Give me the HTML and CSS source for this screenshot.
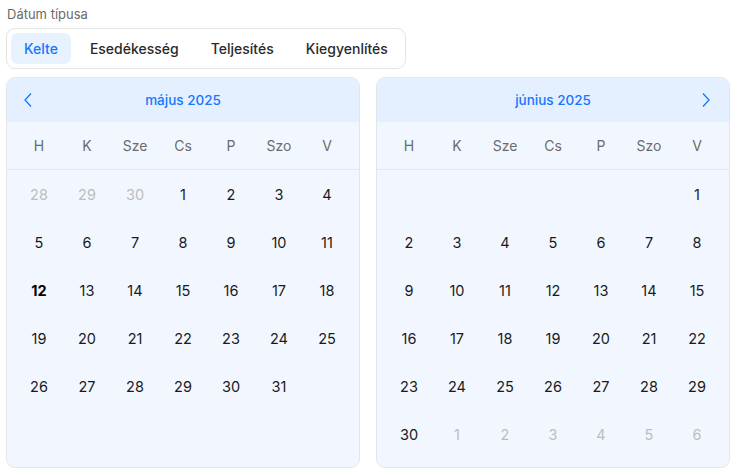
FILE: index.html
```html
<!DOCTYPE html>
<html lang="hu">
<head>
  <meta charset="UTF-8" />
  <title>Dátum típusa</title>
  <link rel="stylesheet" href="styles.css">
</head>
<body>
  <div class="page">
    <div class="field-label">Dátum típusa</div>
    <div class="segmented">
      <button class="seg active">Kelte</button>
      <button class="seg">Esedékesség</button>
      <button class="seg">Teljesítés</button>
      <button class="seg">Kiegyenlítés</button>
    </div>

    <div class="calendars">
      <div class="cal">
        <div class="cal-head">
          <span class="nav prev">
            <svg width="10" height="16" viewBox="0 0 10 16"><path d="M8 1.5 L2 8 L8 14.5" fill="none" stroke="#1677ff" stroke-width="1.3"/></svg>
          </span>
          <span class="cal-title">május 2025</span>
          <span class="nav"></span>
        </div>
        <div class="weekdays">
          <span>H</span><span>K</span><span>Sze</span><span>Cs</span><span>P</span><span>Szo</span><span>V</span>
        </div>
        <div class="days">
          <span class="out">28</span><span class="out">29</span><span class="out">30</span><span>1</span><span>2</span><span>3</span><span>4</span>
          <span>5</span><span>6</span><span>7</span><span>8</span><span>9</span><span>10</span><span>11</span>
          <span class="today">12</span><span>13</span><span>14</span><span>15</span><span>16</span><span>17</span><span>18</span>
          <span>19</span><span>20</span><span>21</span><span>22</span><span>23</span><span>24</span><span>25</span>
          <span>26</span><span>27</span><span>28</span><span>29</span><span>30</span><span>31</span><span></span>
          <span></span><span></span><span></span><span></span><span></span><span></span><span></span>
        </div>
      </div>

      <div class="cal">
        <div class="cal-head">
          <span class="nav"></span>
          <span class="cal-title">június 2025</span>
          <span class="nav next">
            <svg width="10" height="16" viewBox="0 0 10 16"><path d="M2 1.5 L8 8 L2 14.5" fill="none" stroke="#1677ff" stroke-width="1.3"/></svg>
          </span>
        </div>
        <div class="weekdays">
          <span>H</span><span>K</span><span>Sze</span><span>Cs</span><span>P</span><span>Szo</span><span>V</span>
        </div>
        <div class="days">
          <span></span><span></span><span></span><span></span><span></span><span></span><span>1</span>
          <span>2</span><span>3</span><span>4</span><span>5</span><span>6</span><span>7</span><span>8</span>
          <span>9</span><span>10</span><span>11</span><span>12</span><span>13</span><span>14</span><span>15</span>
          <span>16</span><span>17</span><span>18</span><span>19</span><span>20</span><span>21</span><span>22</span>
          <span>23</span><span>24</span><span>25</span><span>26</span><span>27</span><span>28</span><span>29</span>
          <span>30</span><span class="out">1</span><span class="out">2</span><span class="out">3</span><span class="out">4</span><span class="out">5</span><span class="out">6</span>
        </div>
      </div>
    </div>
  </div>
</body>
</html>
```

FILE: styles.css
```css
body {
  margin: 0;
  font-family: Inter, 'Noto Sans', sans-serif;
  background: #fff;
  color: #1a1a1a;
}

.page {
  padding: 5px 6px;
}

.field-label {
  font-size: 13px;
  color: #6b6b6b;
  line-height: 18px;
  margin-left: 1px;
  margin-bottom: 5px;
}

.segmented {
  display: inline-flex;
  gap: 6px;
  padding: 4px;
  border: 1px solid #e4e4e4;
  border-radius: 9px;
  background: #fff;
}

.seg {
  font-family: inherit;
  font-size: 14px;
  font-weight: 500;
  color: #2a2a2a;
  background: transparent;
  border: none;
  border-radius: 7px;
  height: 31px;
  padding: 0 13px;
  cursor: pointer;
}

.seg.active {
  background: #e8f2ff;
  color: #1677ff;
}

.calendars {
  display: flex;
  gap: 16px;
  margin-top: 8px;
}

.cal {
  width: 352px;
  border: 1px solid #e3e6ea;
  border-radius: 9px;
  background: #f2f7ff;
  overflow: hidden;
}

.cal-head {
  display: flex;
  align-items: center;
  justify-content: space-between;
  height: 44px;
  background: #e4f0ff;
  padding: 0 16px;
}

.nav {
  width: 12px;
  display: flex;
  align-items: center;
}

.cal-title {
  font-size: 13.5px;
  font-weight: 500;
  color: #1677ff;
}

.weekdays,
.days {
  display: grid;
  grid-template-columns: repeat(7, 48px);
  padding: 0 8px;
}

.weekdays {
  height: 47px;
  border-bottom: 1px solid #e3e6ea;
  align-items: center;
}

.weekdays span {
  text-align: center;
  font-size: 14px;
  color: #6b6b6b;
}

.days {
  grid-auto-rows: 48px;
  padding-bottom: 9px;
}

.days span {
  display: flex;
  align-items: center;
  justify-content: center;
  font-size: 14.5px;
  color: #1a1a1a;
}

.days span.out {
  color: #bdbdbd;
}

.days span.today {
  font-weight: 700;
  color: #000;
}
```
